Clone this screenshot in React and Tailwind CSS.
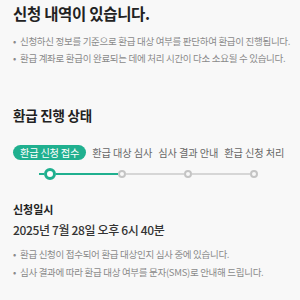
const steps = ["환급 신청 접수", "환급 대상 심사", "심사 결과 안내", "환급 신청 처리"];

function Step({ label, index }) {
  const active = index === 0;
  const first = index === 0;
  const last = index === steps.length - 1;
  return (
    <div className="flex flex-col items-center px-[3px]">
      {active ? (
        <span className="h-[15px] px-[7px] rounded-full bg-[#20b08f] text-white text-[10.2px] leading-[15px] tracking-[-0.2px] whitespace-nowrap">
          {label}
        </span>
      ) : (
        <span className="h-[15px] text-[#666] text-[10.2px] leading-[15px] tracking-[-0.1px] whitespace-nowrap">{label}</span>
      )}
      <div className="mt-[8px] h-[12px] flex items-center w-[calc(100%+6px)] -mx-[3px]">
        <div className="flex-1 flex justify-end">
          {!first && <div className={`h-[2px] w-full ${index === 1 ? "bg-[#20b08f]" : "bg-[#d6d6d6]"}`}></div>}
          {first && <div className="h-[2px] w-[5px] bg-[#20b08f]"></div>}
        </div>
        {active ? (
          <div className="w-[12px] h-[12px] rounded-full border-[3px] border-[#20b08f] bg-white shrink-0"></div>
        ) : (
          <div className="w-[8px] h-[8px] rounded-full border-[2px] border-[#c4c4c4] bg-[#f8f8f8] shrink-0"></div>
        )}
        <div className="flex-1">
          {!last && <div className={`h-[2px] w-full ${first ? "bg-[#20b08f]" : "bg-[#d6d6d6]"}`}></div>}
        </div>
      </div>
    </div>
  );
}

function Bullet({ children }) {
  return (
    <li className="flex gap-[4px] whitespace-nowrap">
      <span>•</span>
      <span>{children}</span>
    </li>
  );
}

export default function App() {
  return (
    <div className="w-[300px] h-[300px] overflow-hidden bg-[#f8f8f8] px-[13px] pt-[3px] font-['Noto_Sans_CJK_KR',sans-serif]">
      <h1 className="text-[15.5px] font-bold text-[#222] leading-[20px] tracking-[-0.3px]">신청 내역이 있습니다.</h1>
      <ul className="mt-[13px] space-y-[6px] text-[9.5px] text-[#8a8a8a] leading-[11px] tracking-[-0.3px]">
        <Bullet>신청하신 정보를 기준으로 환급 대상 여부를 판단하여 환급이 진행됩니다.</Bullet>
        <Bullet>환급 계좌로 환급이 완료되는 데에 처리 시간이 다소 소요될 수 있습니다.</Bullet>
      </ul>

      <h2 className="mt-[42px] text-[13.5px] font-bold text-[#222] leading-[18px] tracking-[-0.2px]">환급 진행 상태</h2>
      <div className="mt-[21px] -ml-[3px] flex">
        {steps.map((s, i) => (
          <Step key={s} label={s} index={i} />
        ))}
      </div>

      <div className="mt-[22px] text-[11px] font-bold text-[#222] leading-[14px]">신청일시</div>
      <div className="mt-[6px] text-[12px] font-medium text-[#333] leading-[16px] tracking-[-0.35px]">2025년 7월 28일 오후 6시 40분</div>
      <ul className="mt-[11px] space-y-[7px] text-[9.5px] text-[#8a8a8a] leading-[11px] tracking-[-0.3px]">
        <Bullet>환급 신청이 접수되어 환급 대상인지 심사 중에 있습니다.</Bullet>
        <Bullet>심사 결과에 따라 환급 대상 여부를 문자(SMS)로 안내해 드립니다.</Bullet>
      </ul>
    </div>
  );
}
